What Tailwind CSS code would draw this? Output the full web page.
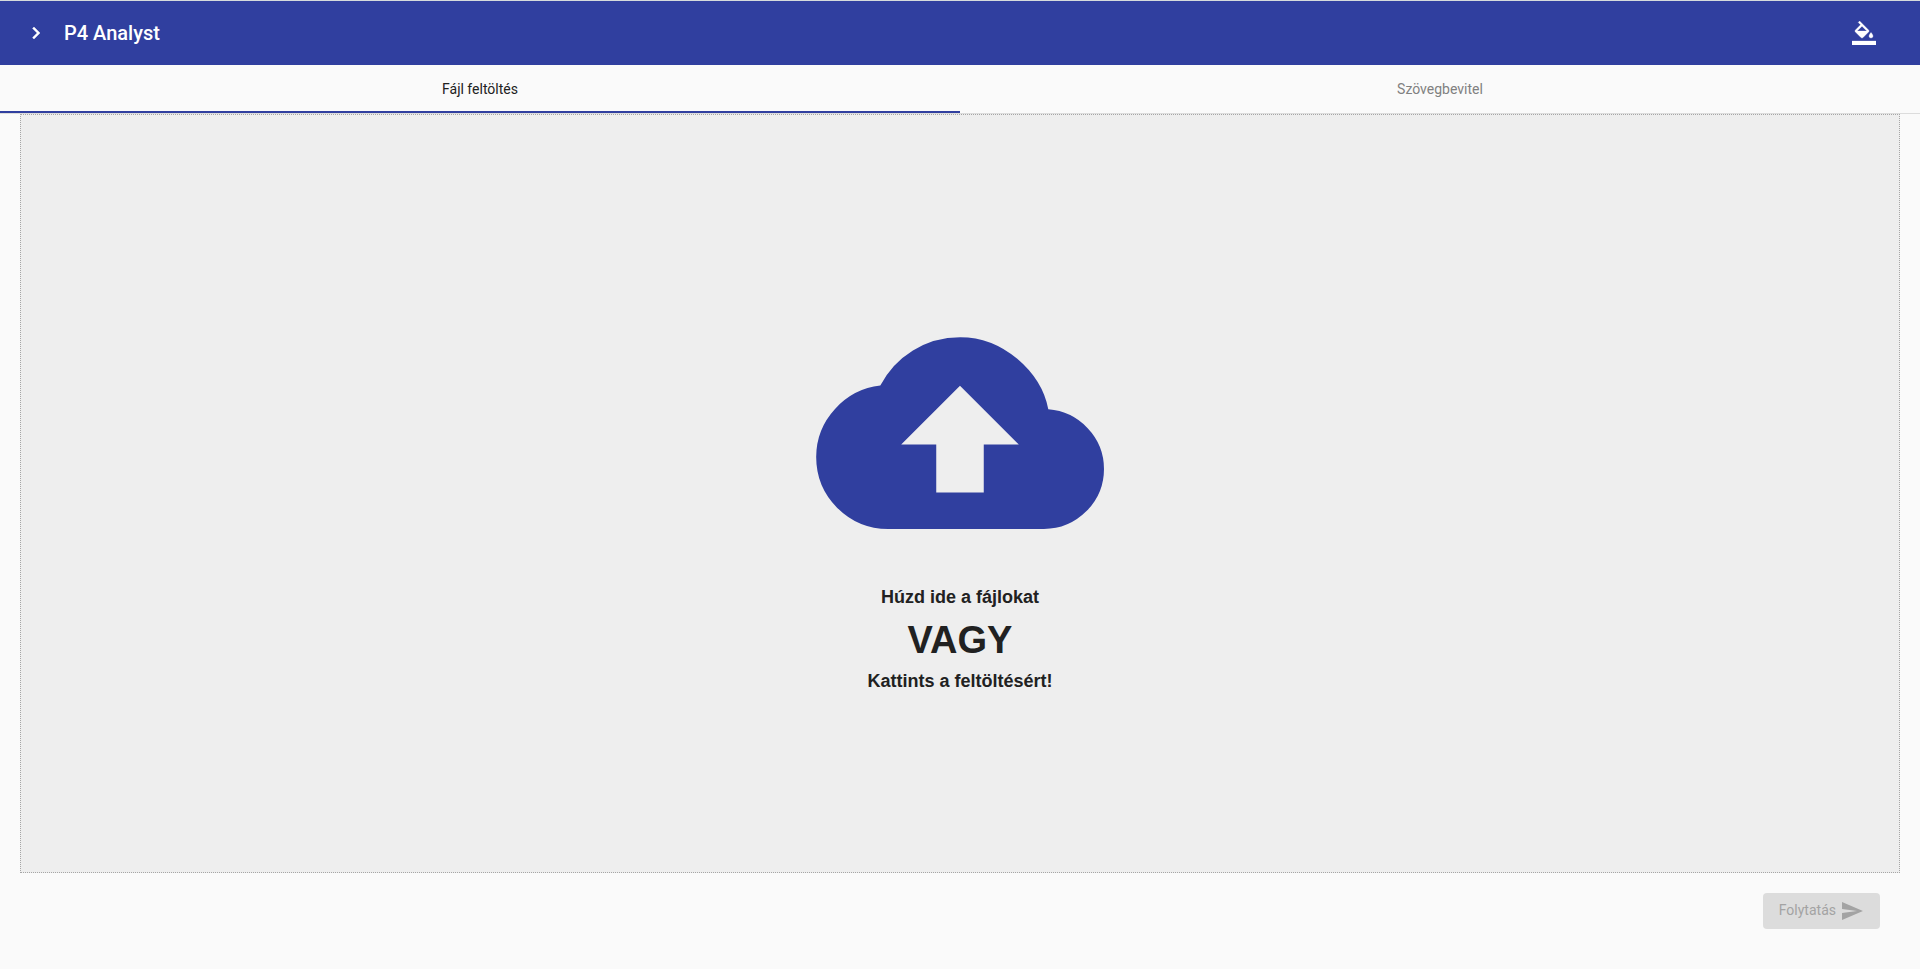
<!DOCTYPE html>
<html lang="hu">
<head>
<meta charset="utf-8">
<meta name="viewport" content="width=device-width, initial-scale=1">
<title>P4 Analyst</title>
<script src="https://cdn.jsdelivr.net/npm/@tailwindcss/browser@4"></script>
</head>
<body class="flex min-h-screen flex-col bg-[#fafafa] font-[Roboto,sans-serif] text-sm text-[#212121]">
  <header class="flex h-[65px] shrink-0 items-center border-t border-[#d5dadc] bg-[#303f9f] pl-6 pr-11 text-white">
    <button type="button" aria-label="Menü megnyitása" class="size-6">
      <svg viewBox="0 0 24 24" class="size-6 fill-current stroke-current" stroke-width="0.5" aria-hidden="true"><path d="M8.578 16.594l4.594-4.594-4.594-4.594 1.406-1.406 6 6-6 6z"/></svg>
    </button>
    <h1 class="ml-4 text-xl font-medium">P4 Analyst</h1>
    <button type="button" aria-label="Téma színe" class="ml-auto size-6">
      <svg viewBox="0 0 24 24" class="size-6 fill-current stroke-current" stroke-width="0.3" aria-hidden="true"><path d="M16.56 8.94L7.62 0 6.21 1.41l2.38 2.38-5.15 5.15c-.59.59-.59 1.54 0 2.12l5.5 5.5c.29.29.68.44 1.06.44s.77-.15 1.06-.44l5.5-5.5c.59-.58.59-1.53 0-2.12zM5.21 10L10 5.21 14.79 10H5.21zM19 11.5s-2 2.17-2 3.5c0 1.1.9 2 2 2s2-.9 2-2c0-1.33-2-3.5-2-3.5zM0 20h24v4H0v-4z"/></svg>
    </button>
  </header>

  <nav role="tablist" class="grid h-[49px] shrink-0 grid-cols-2 border-b border-[#dcdcdc]">
    <button type="button" role="tab" aria-selected="true" class="border-b-2 border-[#303f9f] pt-0.5">Fájl feltöltés</button>
    <button type="button" role="tab" aria-selected="false" class="border-b-2 border-transparent pt-0.5 text-[#808080]">Szövegbevitel</button>
  </nav>

  <main class="flex flex-1 flex-col px-5">
    <label for="files" class="relative flex flex-1 cursor-pointer flex-col items-center justify-center border border-dotted border-[#a6a6a6] bg-[#eeeeee] font-['Liberation_Sans',Arial,sans-serif] text-lg font-bold">
      <svg viewBox="0 0 24 24" class="size-72 fill-[#303f9f]" aria-hidden="true"><path d="M19.359 10.031q1.922 0.141 3.281 1.57t1.359 3.398q0 2.063-1.477 3.531t-3.523 1.469h-12.984q-2.484 0-4.242-1.758t-1.758-4.242q0-2.297 1.57-4.008t3.773-1.945q0.938-1.828 2.719-2.93t3.938-1.102q2.625 0 4.758 1.805t2.586 4.211zM13.98 12.96h2.92l-4.9-4.9-4.9 4.9h2.92v4h3.96v-4z"/></svg>
      <span class="leading-10">Húzd ide a fájlokat</span>
      <span class="text-[38px] leading-[46px]">VAGY</span>
      <span class="leading-9">Kattints a feltöltésért!</span>
      <input id="files" type="file" multiple class="sr-only">
    </label>
    <div class="flex justify-end px-5 pt-5 pb-10">
      <button type="button" disabled class="flex h-9 items-center gap-1 rounded bg-[#dcdcdc] px-4 text-[#a3a3a3]">
        <span class="pb-0.5">Folytatás</span>
        <svg viewBox="0 0 24 24" class="size-6 fill-current" aria-hidden="true"><path d="M2.016 21v-6.984l15-2.016-15-2.016v-6.984l20.953 9z"/></svg>
      </button>
    </div>
  </main>
</body>
</html>
